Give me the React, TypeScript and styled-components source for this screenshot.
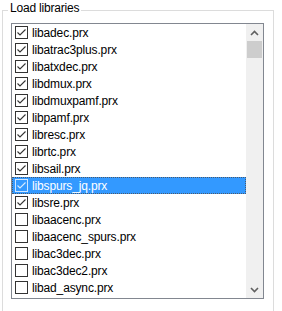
import React from "react";
import styled, { createGlobalStyle } from "styled-components";

const GlobalStyle = createGlobalStyle`
  html, body {
    margin: 0;
    padding: 0;
    background: #ffffff;
    overflow: hidden;
  }
  body {
    font-family: "Liberation Sans", Arial, sans-serif;
    font-size: 12px;
    color: #000;
  }
`;

const Page = styled.div`
  padding: 1px 0 0 2px;
  width: 282px;
  height: 311px;
  box-sizing: border-box;
  overflow: hidden;
`;

const Group = styled.fieldset`
  margin: 0;
  padding: 0;
  width: 272px;
  box-sizing: border-box;
  border: 1px solid #dcdcdc;
`;

const Caption = styled.legend`
  margin-left: 5px;
  padding: 0 2px 4px;
  line-height: 14px;
  letter-spacing: -0.2px;
`;

const ListBox = styled.div`
  display: flex;
  margin: 4px 0 30px 8px;
  width: 253px;
  height: 276px;
  box-sizing: border-box;
  border: 1px solid #828790;
`;

const Items = styled.div`
  flex: 1;
  display: flex;
  flex-direction: column;
  overflow: hidden;
`;

const Row = styled.div<{ $selected?: boolean }>`
  display: flex;
  align-items: center;
  gap: 4px;
  height: 17px;
  flex-shrink: 0;
  padding-left: 3px;
  box-sizing: border-box;
  background: ${(p) => (p.$selected ? "#3399ff" : "transparent")};
  color: ${(p) => (p.$selected ? "#ffffff" : "#000000")};
  outline: ${(p) => (p.$selected ? "1px dotted #4a5a6e" : "none")};
  outline-offset: -1px;
  letter-spacing: -0.15px;
  white-space: nowrap;
`;

const Box = styled.span<{ $selected?: boolean }>`
  display: flex;
  width: 13px;
  height: 13px;
  box-sizing: border-box;
  border: 1px solid ${(p) => (p.$selected ? "#cfe6ff" : "#333333")};
  background: ${(p) => (p.$selected ? "#3399ff" : "#ffffff")};
  flex-shrink: 0;
`;

const ScrollBar = styled.div`
  width: 17px;
  display: flex;
  flex-direction: column;
  background: #f0f0f0;
`;

const ArrowButton = styled.div`
  height: 17px;
  display: flex;
  align-items: center;
  justify-content: center;
  flex-shrink: 0;
`;

const Track = styled.div`
  flex: 1;
  display: flex;
  flex-direction: column;
`;

const Thumb = styled.div`
  height: 17px;
  margin: 0 1px;
  background: #cdcdcd;
`;

const libs = [
  { name: "libadec.prx", on: true },
  { name: "libatrac3plus.prx", on: true },
  { name: "libatxdec.prx", on: true },
  { name: "libdmux.prx", on: true },
  { name: "libdmuxpamf.prx", on: true },
  { name: "libpamf.prx", on: true },
  { name: "libresc.prx", on: true },
  { name: "librtc.prx", on: true },
  { name: "libsail.prx", on: true },
  { name: "libspurs_jq.prx", on: true, selected: true },
  { name: "libsre.prx", on: true },
  { name: "libaacenc.prx", on: false },
  { name: "libaacenc_spurs.prx", on: false },
  { name: "libac3dec.prx", on: false },
  { name: "libac3dec2.prx", on: false },
  { name: "libad_async.prx", on: false },
];

function Check({ color }: { color: string }) {
  return (
    <svg width="11" height="11" viewBox="0 0 11 11">
      <path d="M1.5 5.5 L4 8 L9.5 2.5" fill="none" stroke={color} strokeWidth="1.1" />
    </svg>
  );
}

function Chevron({ up }: { up?: boolean }) {
  return (
    <svg width="9" height="6" viewBox="0 0 9 6">
      <path
        d={up ? "M1 5 L4.5 1.5 L8 5" : "M1 1 L4.5 4.5 L8 1"}
        fill="none"
        stroke="#606060"
        strokeWidth="1.6"
      />
    </svg>
  );
}

export default function App() {
  return (
    <>
      <GlobalStyle />
      <Page>
        <Group>
          <Caption>Load libraries</Caption>
          <ListBox>
            <Items>
              {libs.map((l) => (
                <Row key={l.name} $selected={l.selected}>
                  <Box $selected={l.selected}>
                    {l.on && <Check color={l.selected ? "#d8ecff" : "#333333"} />}
                  </Box>
                  {l.name}
                </Row>
              ))}
            </Items>
            <ScrollBar>
              <ArrowButton>
                <Chevron up />
              </ArrowButton>
              <Track>
                <Thumb />
              </Track>
              <ArrowButton>
                <Chevron />
              </ArrowButton>
            </ScrollBar>
          </ListBox>
        </Group>
      </Page>
    </>
  );
}
